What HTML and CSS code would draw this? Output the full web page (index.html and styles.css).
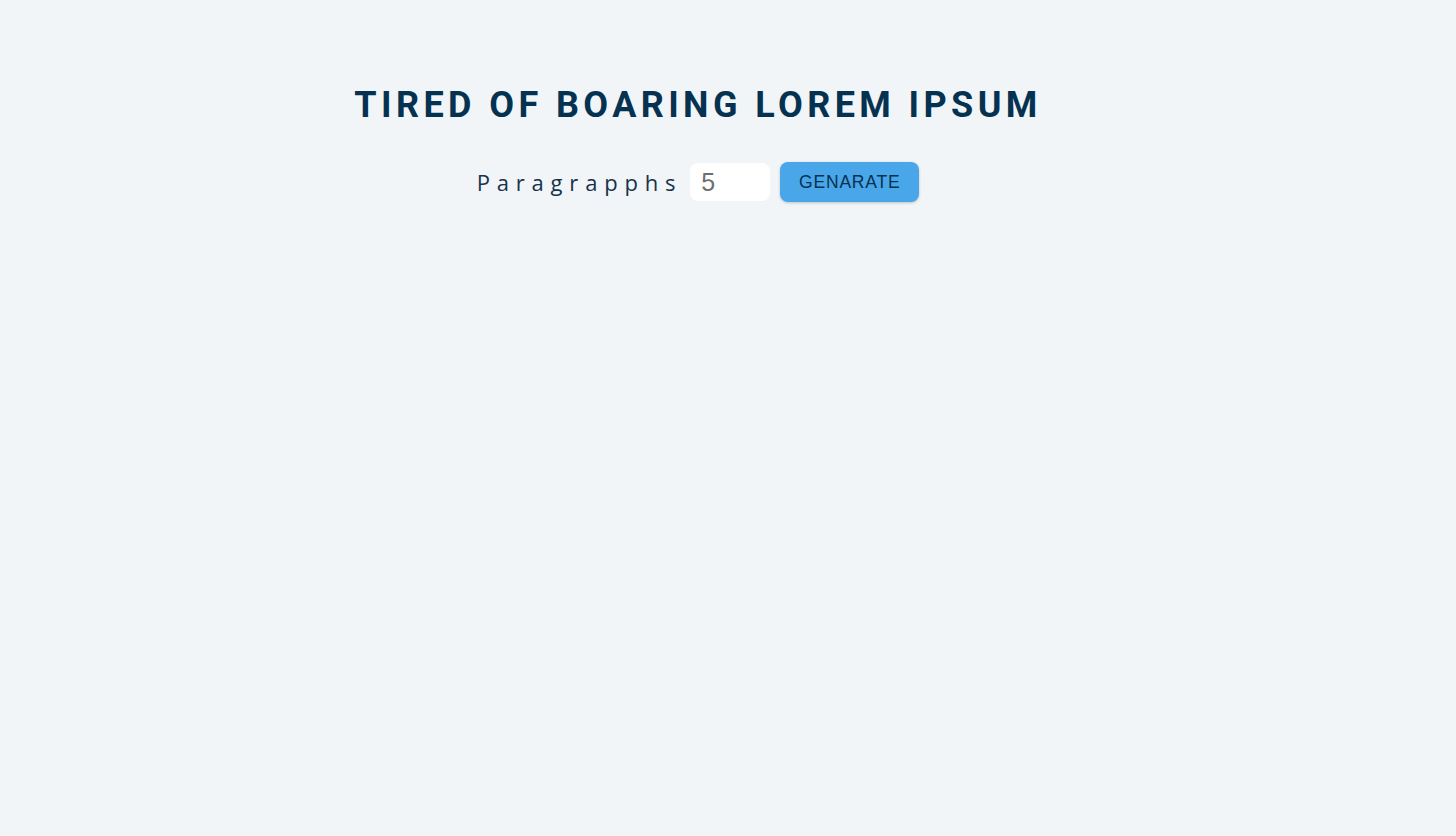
FILE: index.html
```
<!DOCTYPE html>
<html>
<head>
<meta charset="utf-8">
<link rel="stylesheet" href="styles.css">
</head>
<body>
<section class="section-center">
  <h3 class="title">tired of boaring lorem ipsum</h3>
  <form class="lorem-form">
    <label class="label" for="amount">paragrapphs</label>
    <input class="amount" type="number" id="amount" placeholder="5">
    <button class="btn" type="button">genarate</button>
  </form>
</section>
</body>
</html>
```
FILE: styles.css
```
* { box-sizing: border-box; margin: 0; padding: 0; }
html, body { height: 100%; }
body {
  background: #f1f5f8;
  font-family: "Open Sans", sans-serif;
  color: #102a42;
}
.section-center {
  margin: 0 auto;
  padding: 83px 60px 0 0;
  text-align: center;
}
.title {
  font-family: Roboto, sans-serif;
  font-weight: 700;
  font-size: 36px;
  letter-spacing: 4.4px;
  text-transform: uppercase;
  color: #063251;
  line-height: 1.25;
}
.lorem-form {
  display: flex;
  justify-content: center;
  align-items: center;
  margin-top: 34px;
}
.label {
  font-size: 22px;
  letter-spacing: 6.8px;
  text-transform: capitalize;
  color: #17324a;
}
.amount {
  width: 80px;
  height: 38px;
  margin: 0 10px 0 8px;
  padding: 0 11px;
  border: none;
  border-radius: 8px;
  background: #fff;
  font-family: "Liberation Sans", Arial, sans-serif;
  font-size: 25px;
  outline: none;
}
.amount::placeholder { color: #6f6f6f; opacity: 1; }
.btn {
  width: 139px;
  height: 40px;
  background: #49a6e9;
  color: #063251;
  border: none;
  border-radius: 8px;
  font-family: "Liberation Sans", Arial, sans-serif;
  font-size: 17.5px;
  letter-spacing: 0.8px;
  text-transform: uppercase;
  box-shadow: 0 1px 3px rgba(0,0,0,0.2);
}
```
